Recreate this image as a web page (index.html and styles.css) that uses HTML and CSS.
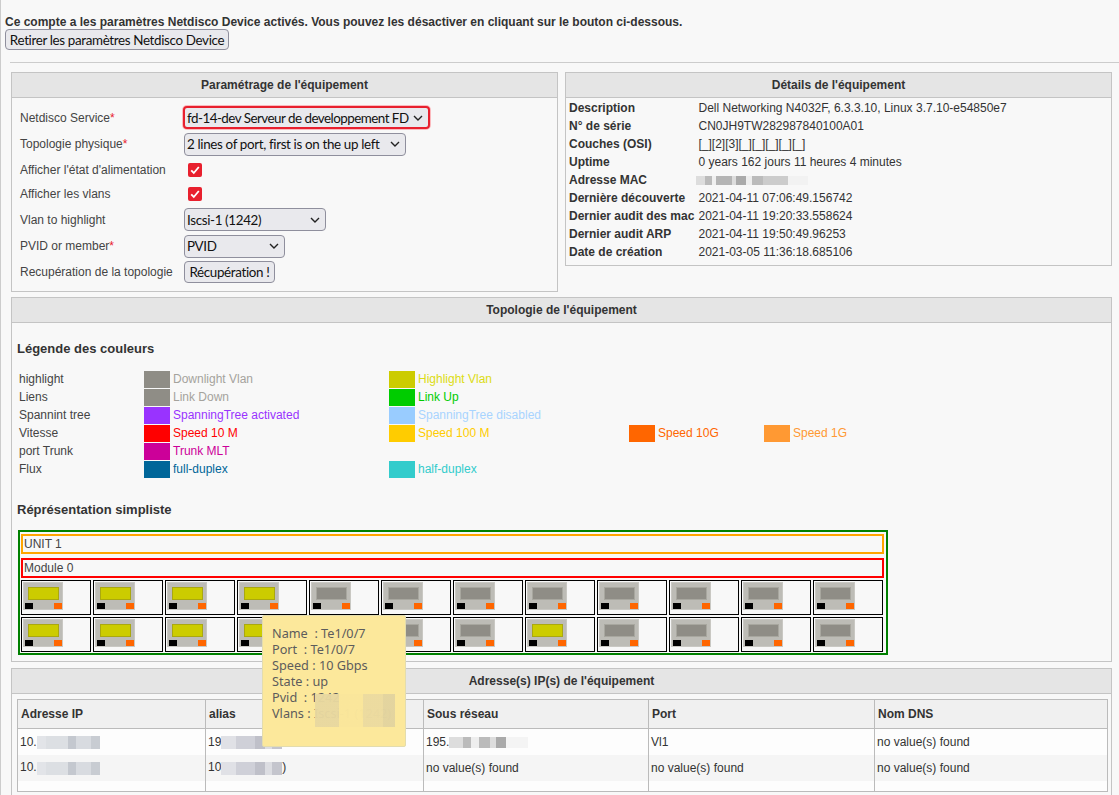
FILE: index.html
```html
<!DOCTYPE html>
<html lang="fr">
<head>
  <meta charset="UTF-8" />
  <meta name="viewport" content="width=device-width, initial-scale=1.0"/>
  <title>Netdisco Device</title>
  <link rel="stylesheet" href="styles.css">
</head>
<body>
  <div class="page">
    <p class="notice">Ce compte a les paramètres Netdisco Device activés. Vous pouvez les désactiver en cliquant sur le bouton ci-dessous.</p>
    <button class="btn btn-retire">Retirer les paramètres Netdisco Device</button>
    <hr class="sep">

    <div class="top-panels">
      <section class="panel panel-form">
        <h2 class="panel-title">Paramétrage de l'équipement</h2>
        <form class="form">
          <div class="form-row row-27">
            <label>Netdisco Service<span class="req">*</span></label>
            <select class="sel sel-service"><option>fd-14-dev Serveur de developpement FD</option></select>
          </div>
          <div class="form-row row-26">
            <label>Topologie physique<span class="req">*</span></label>
            <select class="sel sel-topo"><option>2 lines of port, first is on the up left</option></select>
          </div>
          <div class="form-row row-25">
            <label>Afficher l'état d'alimentation</label>
            <input class="check" type="checkbox" checked>
          </div>
          <div class="form-row row-24">
            <label>Afficher les vlans</label>
            <input class="check" type="checkbox" checked>
          </div>
          <div class="form-row row-27">
            <label>Vlan to highlight</label>
            <select class="sel sel-vlan"><option>Iscsi-1 (1242)</option></select>
          </div>
          <div class="form-row row-26">
            <label>PVID or member<span class="req">*</span></label>
            <select class="sel sel-pvid"><option>PVID</option></select>
          </div>
          <div class="form-row row-26">
            <label>Recupération de la topologie</label>
            <button type="button" class="btn btn-recup">Récupération !</button>
          </div>
        </form>
      </section>

      <section class="panel panel-details">
        <h2 class="panel-title">Détails de l'équipement</h2>
        <dl class="details">
          <dt>Description</dt><dd>Dell Networking N4032F, 6.3.3.10, Linux 3.7.10-e54850e7</dd>
          <dt>N° de série</dt><dd>CN0JH9TW282987840100A01</dd>
          <dt>Couches (OSI)</dt><dd>[_][2][3][_][_][_][_][_]</dd>
          <dt>Uptime</dt><dd>0 years 162 jours 11 heures 4 minutes</dd>
          <dt>Adresse MAC</dt><dd><span class="mosaic mosaic-mac"></span></dd>
          <dt>Dernière découverte</dt><dd>2021-04-11 07:06:49.156742</dd>
          <dt>Dernier audit des mac</dt><dd>2021-04-11 19:20:33.558624</dd>
          <dt>Dernier audit ARP</dt><dd>2021-04-11 19:50:49.96253</dd>
          <dt>Date de création</dt><dd>2021-03-05 11:36:18.685106</dd>
        </dl>
      </section>
    </div>

    <section class="panel panel-topo">
      <h2 class="panel-title">Topologie de l'équipement</h2>
      <h3 class="sub-title sub-legend">Légende des couleurs</h3>
      <div class="legend">
        <span>highlight</span>
        <span class="leg c-down"><i></i>Downlight Vlan</span>
        <span class="leg c-high"><i></i>Highlight Vlan</span>
        <span></span><span></span>

        <span>Liens</span>
        <span class="leg c-down"><i></i>Link Down</span>
        <span class="leg c-up"><i></i>Link Up</span>
        <span></span><span></span>

        <span>Spannint tree</span>
        <span class="leg c-st"><i></i>SpanningTree activated</span>
        <span class="leg c-stoff"><i></i>SpanningTree disabled</span>
        <span></span><span></span>

        <span>Vitesse</span>
        <span class="leg c-red"><i></i>Speed 10 M</span>
        <span class="leg c-100"><i></i>Speed 100 M</span>
        <span class="leg c-10g"><i></i>Speed 10G</span>
        <span class="leg c-1g"><i></i>Speed 1G</span>

        <span>port Trunk</span>
        <span class="leg c-trunk"><i></i>Trunk MLT</span>
        <span></span><span></span><span></span>

        <span>Flux</span>
        <span class="leg c-full"><i></i>full-duplex</span>
        <span class="leg c-half"><i></i>half-duplex</span>
        <span></span><span></span>
      </div>

      <h3 class="sub-title sub-repr">Réprésentation simpliste</h3>
      <div class="chassis">
        <div class="unit">UNIT 1</div>
        <div class="module">Module 0</div>
        <div class="ports">
          <div class="cell"><div class="port on"><b></b><s></s><u></u></div></div>
          <div class="cell"><div class="port on"><b></b><s></s><u></u></div></div>
          <div class="cell"><div class="port on"><b></b><s></s><u></u></div></div>
          <div class="cell"><div class="port on"><b></b><s></s><u></u></div></div>
          <div class="cell"><div class="port"><b></b><s></s><u></u></div></div>
          <div class="cell"><div class="port"><b></b><s></s><u></u></div></div>
          <div class="cell"><div class="port"><b></b><s></s><u></u></div></div>
          <div class="cell"><div class="port"><b></b><s></s><u></u></div></div>
          <div class="cell"><div class="port"><b></b><s></s><u></u></div></div>
          <div class="cell"><div class="port"><b></b><s></s><u></u></div></div>
          <div class="cell"><div class="port"><b></b><s></s><u></u></div></div>
          <div class="cell"><div class="port"><b></b><s></s><u></u></div></div>
          <div class="cell"><div class="port on"><b></b><s></s><u></u></div></div>
          <div class="cell"><div class="port on"><b></b><s></s><u></u></div></div>
          <div class="cell"><div class="port on"><b></b><s></s><u></u></div></div>
          <div class="cell"><div class="port on"><b></b><s></s><u></u></div></div>
          <div class="cell"><div class="port"><b></b><s></s><u></u></div></div>
          <div class="cell"><div class="port"><b></b><s></s><u></u></div></div>
          <div class="cell"><div class="port"><b></b><s></s><u></u></div></div>
          <div class="cell"><div class="port on"><b></b><s></s><u></u></div></div>
          <div class="cell"><div class="port"><b></b><s></s><u></u></div></div>
          <div class="cell"><div class="port"><b></b><s></s><u></u></div></div>
          <div class="cell"><div class="port"><b></b><s></s><u></u></div></div>
          <div class="cell"><div class="port"><b></b><s></s><u></u></div></div>
        </div>
      </div>
    </section>

    <section class="panel panel-ip">
      <h2 class="panel-title">Adresse(s) IP(s) de l'équipement</h2>
      <table class="ip-table">
        <thead>
          <tr><th class="col-ip">Adresse IP</th><th class="col-alias">alias</th><th class="col-net">Sous réseau</th><th class="col-port">Port</th><th>Nom DNS</th></tr>
        </thead>
        <tbody>
          <tr><td>10.<span class="mosaic mosaic-ip"></span></td><td>19<span class="mosaic mosaic-alias"></span></td><td>195.<span class="mosaic mosaic-net"></span></td><td>Vl1</td><td>no value(s) found</td></tr>
          <tr class="even"><td>10.<span class="mosaic mosaic-ip"></span></td><td>10<span class="mosaic mosaic-alias"></span>)</td><td>no value(s) found</td><td>no value(s) found</td><td>no value(s) found</td></tr>
          <tr class="spacer"><td></td><td></td><td></td><td></td><td></td></tr>
        </tbody>
      </table>
    </section>

    <div class="tooltip">
      <div>Name&nbsp; : Te1/0/7</div>
      <div>Port&nbsp; : Te1/0/7</div>
      <div>Speed : 10 Gbps</div>
      <div>State : up</div>
      <div>Pvid&nbsp; : 1242</div>
      <div>Vlans : Iscsi-1 (1242)</div>
      <span class="tip-blur"></span>
    </div>
  </div>
</body>
</html>
```

FILE: styles.css
```css
* {
  box-sizing: border-box;
}
html, body {
  margin: 0;
  height: 100%;
  overflow: hidden;
}
body {
  background: #f8f8f8;
  font-family: "Liberation Sans", Arial, sans-serif;
  font-size: 12px;
  color: #333;
}
.page {
  position: relative;
  height: 795px;
  overflow: hidden;
  border-left: 1px solid #ccc;
  padding: 15px 7px 0 10px;
}
.notice {
  margin: 0 0 0 -6px;
  font-weight: bold;
  font-size: 12px;
  line-height: 14px;
}
.btn {
  font-family: Lato, sans-serif;
  font-size: 13.4px;
  letter-spacing: -0.35px;
  color: #111;
  background: #e9e9ed;
  border: 1px solid #8f8f9d;
  border-radius: 4px;
  padding: 0;
  height: 22px;
  white-space: nowrap;
}
.btn-retire {
  display: block;
  margin: 0 0 0 -6px;
  width: 224px;
  height: 21px;
}
.btn-recup {
  width: 91px;
}
.sep {
  margin: 12px -7px 9px -1px;
  border: 0;
  border-top: 1px solid #ccc;
}
.top-panels {
  display: grid;
  grid-template-columns: 547px 547px;
  gap: 7px;
  align-items: start;
}
.panel {
  background: #f8f8f8;
  border: 1px solid #c4c4c4;
}
.panel-title {
  margin: 0;
  height: 25px;
  background: #e5e5e5;
  border-bottom: 1px solid #c4c4c4;
  font-size: 12px;
  line-height: 24px;
  text-align: center;
}
.form {
  padding: 6px 8px 6px;
}
.form-row {
  display: grid;
  grid-template-columns: 164px 1fr;
  align-items: center;
  color: #444;
}
.row-24 { height: 24px; }
.row-25 { height: 25px; }
.row-26 { height: 26px; }
.row-27 { height: 27px; }
.req {
  color: #e8202e;
}
.sel {
  appearance: none;
  font-family: Lato, sans-serif;
  font-size: 13.4px;
  letter-spacing: -0.35px;
  color: #111;
  height: 23px;
  padding: 0 14px 0 2px;
  background: #e9e9ed url("data:image/svg+xml,%3Csvg xmlns='http://www.w3.org/2000/svg' width='10' height='6'%3E%3Cpath d='M1 1l4 4 4-4' fill='none' stroke='%23222' stroke-width='1.4'/%3E%3C/svg%3E") no-repeat right 5px center;
  border: 1px solid #8f8f9d;
  border-radius: 4px;
}
.sel-service {
  width: 247px;
  letter-spacing: -0.52px;
  border: 2px solid #e8202e;
  box-shadow: 0 0 0 1px #fbb9bd;
  margin-left: -1px;
}
.sel-topo { width: 222px; }
.sel-vlan { width: 142px; }
.sel-pvid { width: 101px; }
.check {
  appearance: none;
  margin: 0 0 0 4px;
  width: 14px;
  height: 14px;
  border-radius: 2px;
  background: #e8202e url("data:image/svg+xml,%3Csvg xmlns='http://www.w3.org/2000/svg' width='14' height='14'%3E%3Cpath d='M3.2 7.4l2.6 2.6 5-6' fill='none' stroke='%23fff' stroke-width='1.8'/%3E%3C/svg%3E") no-repeat center;
}
.details {
  display: grid;
  grid-template-columns: 129.5px 1fr;
  grid-auto-rows: 18px;
  margin: 0;
  padding: 1px 3px 4px;
  line-height: 18px;
}
.details dt {
  font-weight: bold;
  white-space: nowrap;
}
.details dd {
  margin: 0;
}
.panel-topo {
  margin-top: 5px;
  height: 365px;
}
.sub-title {
  margin: 0;
  font-size: 13px;
  line-height: 16px;
  padding-left: 5px;
}
.sub-legend {
  padding-top: 18px;
}
.legend {
  display: grid;
  grid-template-columns: 125px 245px 240px 135px 200px;
  grid-auto-rows: 18px;
  margin: 14px 0 0 7px;
  line-height: 17px;
  color: #444;
}
.leg {
  display: flex;
  gap: 3px;
}
.leg i {
  width: 26px;
  height: 17px;
}
.c-down i { background: #8f8d86; }
.c-down { color: #a5a39d; }
.c-high i { background: #cccc00; }
.c-high { color: #dcdc14; }
.c-up i { background: #00cc00; }
.c-up { color: #00cc00; }
.c-st i { background: #9933ff; }
.c-st { color: #9933ff; }
.c-stoff i { background: #99ccff; }
.c-stoff { color: #a8d4ff; }
.c-red i { background: #ff0000; }
.c-red { color: #ff0000; }
.c-100 i { background: #ffcc00; }
.c-100 { color: #ffcc00; }
.c-10g i { background: #ff6600; }
.c-10g { color: #ff6600; }
.c-1g i { background: #ff9933; }
.c-1g { color: #ff9933; }
.c-trunk i { background: #cc0099; }
.c-trunk { color: #cc0099; }
.c-full i { background: #006699; }
.c-full { color: #006699; }
.c-half i { background: #33cccc; }
.c-half { color: #33cccc; }
.sub-repr {
  padding-top: 23px;
}
.chassis {
  margin: 12px 0 0 6px;
  width: 870px;
  height: 125px;
  border: 2px solid #008000;
  padding: 2px 2px 2px 1px;
}
.unit, .module {
  height: 20px;
  border: 2px solid #ffa500;
  padding-left: 1px;
  line-height: 16px;
  color: #444;
}
.module {
  margin-top: 4px;
  border-color: #ff0000;
}
.ports {
  display: grid;
  grid-template-columns: repeat(12, 70px);
  grid-auto-rows: 35px;
  gap: 2px;
  margin-top: 2px;
}
.cell {
  border: 1px solid #000;
  padding: 1px;
}
.port {
  position: relative;
  width: 40px;
  height: 28px;
  background: #bdbcb6;
  border: 1px solid #c9c8c3;
}
.port b {
  position: absolute;
  left: 4px;
  top: 4px;
  width: 31px;
  height: 13px;
  background: #8f8d86;
  border: 1px solid #a8a79f;
}
.port.on b {
  background: #cccc00;
  border-color: #aaa810;
}
.port s {
  position: absolute;
  left: 1px;
  bottom: 0;
  width: 8px;
  height: 6px;
  background: #000;
}
.port u {
  position: absolute;
  right: 0;
  bottom: 0;
  width: 8px;
  height: 6px;
  background: #ff6600;
}
.panel-ip {
  margin-top: 6px;
  height: 140px;
}
.ip-table {
  margin: 5px 0 0 5px;
  width: 1091px;
  border-collapse: collapse;
  table-layout: fixed;
  border: 1px solid #bbb;
}
.ip-table th, .ip-table td {
  border-left: 1px solid #bbb;
  text-align: left;
  padding: 0 2px;
  white-space: nowrap;
}
.ip-table th {
  height: 29px;
  background: #f0f0f0;
  border-bottom: 1px solid #bbb;
  padding: 0 3px;
}
.ip-table td {
  height: 26px;
  background: #fdfdfd;
}
.ip-table .even td {
  background: #f5f5f5;
}
.ip-table .spacer td {
  height: 11px;
}
.col-ip { width: 188px; }
.col-alias { width: 218px; }
.col-net { width: 225px; }
.col-port { width: 226px; }
.mosaic {
  display: inline-block;
  height: 13px;
  vertical-align: middle;
}
.mosaic-mac {
  width: 112px;
  height: 9px;
  margin-left: -3px;
  background: linear-gradient(90deg, #ddd 0 8%, #bbb 8% 14%, #f0f0f0 14% 18%, #b5b5b5 18% 32%, #ddd 32% 36%, #aaa 36% 45%, #eee 45% 50%, #bbb 50% 60%, #ccc 60% 82%, #f2f2f2 82%);
}
.mosaic-ip {
  width: 63px;
  background: linear-gradient(90deg, #e2e4e8 0 15%, #dcdfe3 15% 50%, #c4c8cf 50% 62%, #d8dbe0 62% 85%, #c8ccd2 85%);
}
.mosaic-alias {
  width: 61px;
  background: linear-gradient(90deg, #e0e1e6 0 25%, #cfd0d8 25% 55%, #bfc0c9 55% 72%, #dcdde2 72% 84%, #c4c5cd 84%);
}
.mosaic-net {
  width: 79px;
  height: 11px;
  background: linear-gradient(90deg, #ddd 0 18%, #bbb 18% 28%, #eee 28% 38%, #bbb 38% 52%, #ddd 52% 60%, #aaa 60% 72%, #f4f4f4 72%);
}
.tooltip {
  position: absolute;
  left: 261px;
  top: 615px;
  width: 144px;
  height: 132px;
  padding: 9px 9px;
  background: #fce89b;
  border: 1px solid #e3dcae;
  border-radius: 2px;
  font-family: "Noto Sans", sans-serif;
  font-size: 12.7px;
  line-height: 16px;
  color: #5c5c5c;
  white-space: nowrap;
}
.tip-blur {
  position: absolute;
  left: 52px;
  top: 78px;
  width: 80px;
  height: 33px;
  background: linear-gradient(90deg, rgba(232,216,160,0.96) 0 30%, rgba(250,230,155,0.98) 30% 60%, rgba(236,219,160,0.98) 60% 85%, rgba(227,212,159,0.98) 85%);
}
```
